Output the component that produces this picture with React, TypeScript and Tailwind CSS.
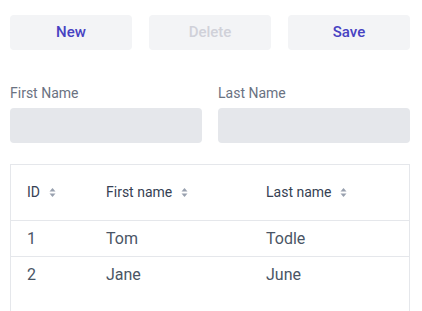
import React from "react";

const SortIcon = () => (
  <svg width="7" height="11" viewBox="0 0 7 11" className="ml-[9px] text-gray-400" fill="currentColor">
    <path d="M3.5 1 L6.5 4.5 H0.5 Z" />
    <path d="M3.5 10 L6.5 6.5 H0.5 Z" />
  </svg>
);

const rows = [
  { id: 1, first: "Tom", last: "Todle" },
  { id: 2, first: "Jane", last: "June" },
];

export default function App() {
  return (
    <div className="w-[422px] h-[311px] overflow-hidden bg-white pl-[10px] pr-[12px] pt-[15px] font-['Roboto',sans-serif]">
      {/* Actions */}
      <div className="grid grid-cols-3 gap-[17px]">
        <button className="h-[35px] rounded bg-gray-100 text-[15px] font-medium text-[#4742c2]">New</button>
        <button className="h-[35px] rounded bg-gray-100 text-[15px] font-medium text-[#d0d1d9]" disabled>
          Delete
        </button>
        <button className="h-[35px] rounded bg-gray-100 text-[15px] font-medium text-[#4742c2]">Save</button>
      </div>

      {/* Form */}
      <div className="mt-[33px] grid grid-cols-2 gap-4">
        <label className="flex flex-col">
          <span className="text-[14px] leading-5 text-gray-500">First Name</span>
          <input className="mt-[5px] h-[35px] rounded bg-gray-200 outline-none" />
        </label>
        <label className="flex flex-col">
          <span className="text-[14px] leading-5 text-gray-500">Last Name</span>
          <input className="mt-[5px] h-[35px] rounded bg-gray-200 outline-none" />
        </label>
      </div>

      {/* Table */}
      <div className="mt-[21px] h-[200px] border border-gray-200">
        <table className="w-full table-fixed border-collapse text-left">
          <colgroup>
            <col className="w-[95px]" />
            <col className="w-[160px]" />
            <col />
          </colgroup>
          <thead>
            <tr className="h-[55px] border-b border-gray-200 text-[14px] text-gray-700">
              <th className="pl-4 font-normal">
                <span className="flex items-center">ID<SortIcon /></span>
              </th>
              <th className="font-normal">
                <span className="flex items-center">First name<SortIcon /></span>
              </th>
              <th className="font-normal">
                <span className="flex items-center">Last name<SortIcon /></span>
              </th>
            </tr>
          </thead>
          <tbody className="text-[16px] text-gray-600">
            {rows.map((r) => (
              <tr key={r.id} className="h-[36px] border-b border-gray-200 last:border-b-0">
                <td className="pl-4 pt-[2px]">{r.id}</td>
                <td className="pt-[2px]">{r.first}</td>
                <td className="pt-[2px]">{r.last}</td>
              </tr>
            ))}
          </tbody>
        </table>
      </div>
    </div>
  );
}
